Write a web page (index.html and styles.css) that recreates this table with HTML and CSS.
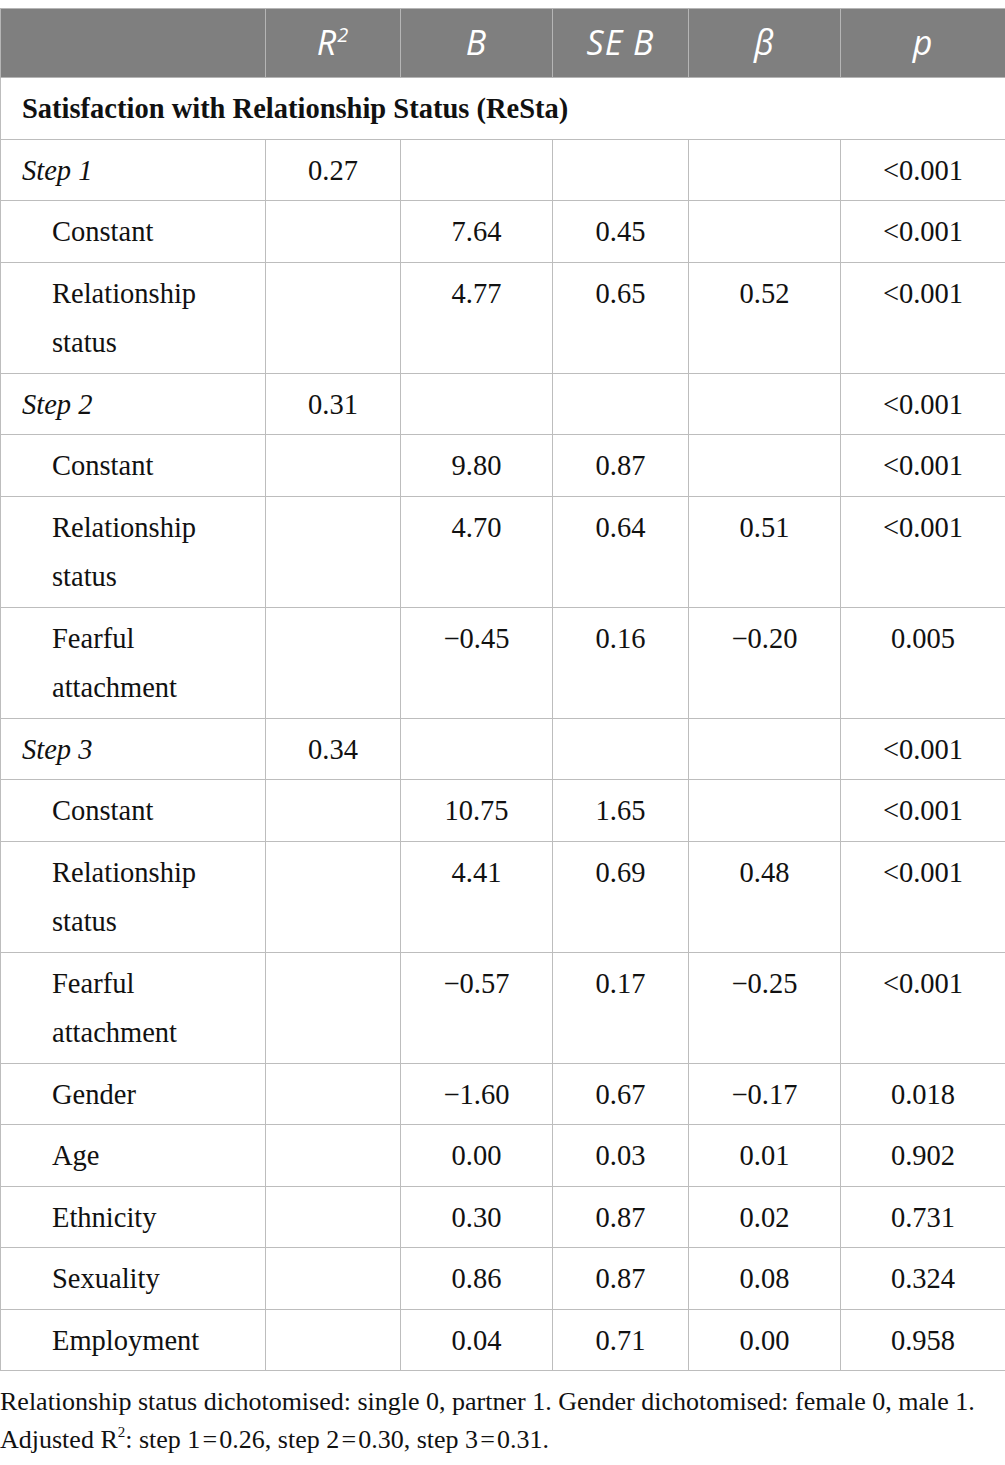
FILE: index.html
```html
<!DOCTYPE html>
<html>
  <head>
    <meta http-equiv="Content-Type" content="text/html; charset=utf-8"/>
    <title>Regression table</title>
    <link rel="stylesheet" href="styles.css">
  </head>
  <body>
  <div class="container">
    <table id="results_table">
      <colgroup>
        <col class="col_label">
        <col class="col_r2">
        <col class="col_b">
        <col class="col_se">
        <col class="col_beta">
        <col class="col_p">
      </colgroup>
      <tr class="head_row">
        <th></th>
        <th>R<sup>2</sup></th>
        <th>B</th>
        <th>SE B</th>
        <th>&beta;</th>
        <th>p</th>
      </tr>
      <tr>
        <td colspan="6" class="section">Satisfaction with Relationship Status (ReSta)</td>
      </tr>
      <tr>
        <td class="step">Step 1</td><td>0.27</td><td></td><td></td><td></td><td>&lt;0.001</td>
      </tr>
      <tr>
        <td class="sub">Constant</td><td></td><td>7.64</td><td>0.45</td><td></td><td>&lt;0.001</td>
      </tr>
      <tr>
        <td class="sub">Relationship status</td><td></td><td>4.77</td><td>0.65</td><td>0.52</td><td>&lt;0.001</td>
      </tr>
      <tr>
        <td class="step">Step 2</td><td>0.31</td><td></td><td></td><td></td><td>&lt;0.001</td>
      </tr>
      <tr>
        <td class="sub">Constant</td><td></td><td>9.80</td><td>0.87</td><td></td><td>&lt;0.001</td>
      </tr>
      <tr>
        <td class="sub">Relationship status</td><td></td><td>4.70</td><td>0.64</td><td>0.51</td><td>&lt;0.001</td>
      </tr>
      <tr>
        <td class="sub">Fearful attachment</td><td></td><td>&minus;0.45</td><td>0.16</td><td>&minus;0.20</td><td>0.005</td>
      </tr>
      <tr>
        <td class="step">Step 3</td><td>0.34</td><td></td><td></td><td></td><td>&lt;0.001</td>
      </tr>
      <tr>
        <td class="sub">Constant</td><td></td><td>10.75</td><td>1.65</td><td></td><td>&lt;0.001</td>
      </tr>
      <tr>
        <td class="sub">Relationship status</td><td></td><td>4.41</td><td>0.69</td><td>0.48</td><td>&lt;0.001</td>
      </tr>
      <tr>
        <td class="sub">Fearful attachment</td><td></td><td>&minus;0.57</td><td>0.17</td><td>&minus;0.25</td><td>&lt;0.001</td>
      </tr>
      <tr>
        <td class="sub">Gender</td><td></td><td>&minus;1.60</td><td>0.67</td><td>&minus;0.17</td><td>0.018</td>
      </tr>
      <tr>
        <td class="sub">Age</td><td></td><td>0.00</td><td>0.03</td><td>0.01</td><td>0.902</td>
      </tr>
      <tr>
        <td class="sub">Ethnicity</td><td></td><td>0.30</td><td>0.87</td><td>0.02</td><td>0.731</td>
      </tr>
      <tr>
        <td class="sub">Sexuality</td><td></td><td>0.86</td><td>0.87</td><td>0.08</td><td>0.324</td>
      </tr>
      <tr>
        <td class="sub">Employment</td><td></td><td>0.04</td><td>0.71</td><td>0.00</td><td>0.958</td>
      </tr>
    </table>

    <div class="footnote">
      <p>Relationship status dichotomised: single 0, partner 1. Gender dichotomised: female 0, male 1.</p>
      <p>Adjusted R<sup>2</sup>: step 1&#8202;=&#8202;0.26, step 2&#8202;=&#8202;0.30, step 3&#8202;=&#8202;0.31.</p>
    </div>
  </div>
  </body>
</html>
```

FILE: styles.css
```css
body { margin: 0; background: #ffffff; }
div.container { padding-top: 8px; }

#results_table {
  width: 1005px;
  table-layout: fixed;
  border-collapse: collapse;
  font-family: "Liberation Serif", "Times New Roman", serif;
  font-size: 28.5px;
  color: #111111;
}
col.col_label { width: 265px; }
col.col_r2 { width: 135px; }
col.col_b { width: 152px; }
col.col_se { width: 136px; }
col.col_beta { width: 152px; }
col.col_p { width: 165px; }

#results_table th {
  background: #7f7f7f;
  color: #ffffff;
  font-family: "Open Sans", "Liberation Sans", sans-serif;
  font-style: italic;
  font-weight: normal;
  font-size: 34px;
  line-height: 40px;
  letter-spacing: 1px;
  height: 65px;
  padding: 0 0 3px 0;
  text-align: center;
  vertical-align: middle;
  border: 1px solid #b5b5b5;
}
#results_table th sup { font-size: 20px; line-height: 0; vertical-align: 13px; }

#results_table td {
  border: 1px solid #bdbdbd;
  line-height: 49.5px;
  padding: 6px 0 5px 0;
  text-align: center;
  vertical-align: top;
}
#results_table td.section {
  text-align: left;
  font-weight: bold;
  padding-left: 21px;
}
#results_table td.step {
  text-align: left;
  font-style: italic;
  padding-left: 21px;
}
#results_table td.sub {
  text-align: left;
  padding-left: 51px;
  padding-right: 60px;
}

div.footnote {
  font-family: "Liberation Serif", "Times New Roman", serif;
  font-size: 26px;
  color: #111111;
  padding-top: 12px;
}
div.footnote p { margin: 0; line-height: 38px; white-space: nowrap; }
div.footnote sup { font-size: 15px; line-height: 0; vertical-align: 11px; }
```
